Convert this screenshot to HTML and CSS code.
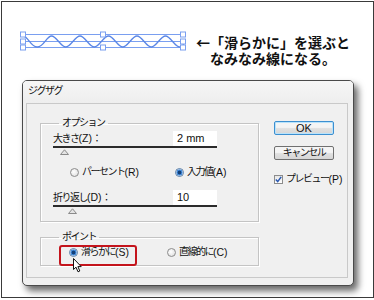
FILE: index.html
```html
<!DOCTYPE html>
<html lang="ja">
<head>
<meta charset="utf-8">
<title>ジグザグ</title>
<link rel="stylesheet" href="styles.css">
</head>
<body>
<div class="frame">
  <header class="note">
    <svg class="wave" width="166" height="20" viewBox="0 0 166 20">
      <g fill="none" stroke="#7a9ff0" stroke-width="1">
        <line x1="3" y1="3.5" x2="163" y2="3.5"/>
        <line x1="3" y1="10.5" x2="163" y2="10.5"/>
        <line x1="3" y1="16.5" x2="163" y2="16.5"/>
        <path d="M3 5 C 8 5, 10.5 16, 17.25 16 S 26.5 5, 31.5 5 S 40.75 16, 45.75 16 S 55 5, 60 5 S 69.25 16, 74.25 16 S 83.5 5, 88.5 5 S 97.75 16, 102.75 16 S 112 5, 117 5 S 126.25 16, 131.25 16 S 140.5 5, 145.5 5 S 154.75 16, 159.75 16 S 163 13, 163 12" stroke="#5a86e6" stroke-width="1.3"/>
      </g>
      <g fill="#fff" stroke="#7a9ff0" stroke-width="1">
        <rect x="0.5" y="1" width="5" height="5"/>
        <rect x="0.5" y="8" width="5" height="5"/>
        <rect x="0.5" y="14" width="5" height="5"/>
        <rect x="80.5" y="1" width="5" height="5"/>
        <rect x="80.5" y="14" width="5" height="5"/>
        <rect x="160.5" y="1" width="5" height="5"/>
        <rect x="160.5" y="8" width="5" height="5"/>
        <rect x="160.5" y="14" width="5" height="5"/>
      </g>
    </svg>
    <p class="caption"><span class="line">←「滑らかに」を選ぶと</span><span class="line">なみなみ線になる。</span></p>
  </header>

  <div class="dialog">
    <div class="titlebar">ジグザグ</div>
    <div class="panel">
      <div class="groups">
        <fieldset class="group options">
          <legend>オプション</legend>
          <div class="field">
            <span class="label">大きさ<span class="en">(Z)</span>：</span>
            <span class="input">2 mm</span>
          </div>
          <div class="slider">
            <svg class="thumb thumb-size" width="9" height="6" viewBox="0 0 9 6"><path d="M0.5 5.5 L4.5 0.8 L8.5 5.5 Z" fill="#e4e4e4" stroke="#8a8a8a" stroke-width="1"/></svg>
          </div>
          <div class="radios radios-options">
            <span class="choice"><span class="radio"></span>パーセント<span class="en">(R)</span></span>
            <span class="choice"><span class="radio on"></span>入力値<span class="en">(A)</span></span>
          </div>
          <div class="field field-second">
            <span class="label">折り返し<span class="en">(D)</span>：</span>
            <span class="input">10</span>
          </div>
          <div class="slider">
            <svg class="thumb thumb-ridges" width="9" height="6" viewBox="0 0 9 6"><path d="M0.5 5.5 L4.5 0.8 L8.5 5.5 Z" fill="#e4e4e4" stroke="#8a8a8a" stroke-width="1"/></svg>
          </div>
        </fieldset>

        <fieldset class="group points">
          <legend>ポイント</legend>
          <div class="radios radios-points">
            <span class="choice"><span class="radio on"></span>滑らかに<span class="en">(S)</span></span>
            <span class="choice"><span class="radio"></span>直線的に<span class="en">(C)</span></span>
          </div>
          <span class="callout"></span>
          <svg class="cursor" width="10" height="15" viewBox="0 0 10 15">
            <path d="M0.5 0.5 L0.5 11.5 L3 9.2 L5 13.8 L6.8 13 L4.9 8.6 L8.2 8.6 Z" fill="#fff" stroke="#111" stroke-width="1" stroke-linejoin="round"/>
          </svg>
        </fieldset>
      </div>

      <div class="buttons">
        <span class="btn btn-default">OK</span>
        <span class="btn">キャンセル</span>
        <span class="check"><span class="box">
          <svg width="7" height="7" viewBox="0 0 7 7"><path d="M0.8 3.6 L2.7 5.6 L6.2 0.9" fill="none" stroke="#2a58b0" stroke-width="1.5"/></svg>
        </span>プレビュー<span class="en">(P)</span></span>
      </div>
    </div>
  </div>
</div>
</body>
</html>
```

FILE: styles.css
```css
* { box-sizing: border-box; }

html, body {
  margin: 0;
  padding: 0;
  background: #fff;
}

.frame {
  margin: 1px 0 0 1px;
  width: 373px;
  height: 297px;
  border: 1px solid #3a3a3a;
  background: #fff;
}

.note {
  display: flex;
  align-items: flex-start;
  height: 78px;
}

.wave {
  display: block;
  margin: 29px 0 0 18px;
}

.caption {
  margin: 33px 0 0 9px;
  width: 156px;
  text-align: center;
  font: 700 14px/15px "Noto Sans CJK JP", sans-serif;
  color: #111;
  white-space: nowrap;
}

.caption .line {
  display: block;
  height: 15.5px;
}

.dialog {
  margin-left: 20px;
  width: 332px;
  height: 206px;
  border: 1px solid #4a4a4a;
  border-radius: 5px;
  background: #f0f0f0;
  box-shadow: 4px 5px 7px rgba(0, 0, 0, 0.6);
  font: 10px/12px "Liberation Sans", "Noto Sans CJK JP", sans-serif;
  color: #111;
  letter-spacing: -1.5px;
  white-space: nowrap;
}

.en { letter-spacing: 0; font-size: 10.5px; }

.titlebar {
  height: 22px;
  padding: 4px 0 0 5px;
  line-height: 12px;
  border-radius: 4px 4px 0 0;
  background: linear-gradient(#f6f6f6, #eeeeee);
}

.panel {
  display: flex;
  margin: 0 5px 0 3px;
  height: 175px;
  padding: 13px 0 0 13px;
  border: 1px solid #c9c9c9;
  background: #f0f0f0;
}

.groups {
  width: 219px;
  flex: none;
  display: flex;
  flex-direction: column;
}

.group {
  position: relative;
  margin: 0;
  min-width: 0;
  padding: 0 41px 0 12px;
  border: 1px solid #c4c4c4;
  box-shadow: inset 1px 1px 0 #fff, 1px 1px 0 #fff;
}

.group legend {
  margin-left: 6px;
  padding: 0 3px;
  line-height: 12px;
}

.options { padding-bottom: 8px; }

.field {
  display: flex;
  justify-content: space-between;
  align-items: center;
  height: 15px;
  margin-top: 2px;
}

.field-second { margin-top: 12px; }

.input {
  width: 44px;
  height: 15px;
  padding: 0 0 0 4px;
  background: #fff;
  line-height: 15px;
  letter-spacing: 0;
  font-size: 11px;
}

.slider {
  height: 8px;
  border-top: 2px solid #2b2b2b;
}

.thumb {
  display: block;
  margin-top: 1px;
}

.thumb-size { margin-left: 7px; }
.thumb-ridges { margin-left: 15px; }

.radios {
  display: flex;
  align-items: center;
  height: 12px;
}

.radios-options { margin-top: 12px; padding-left: 17px; }
.radios-options .choice:first-child { width: 105px; }

.points { padding-bottom: 7px; margin-top: 9px; }
.radios-points { margin-top: 3px; padding-left: 16px; }
.radios-points .choice:first-child { width: 98px; }

.choice {
  display: flex;
  align-items: center;
  flex: none;
}

.radio {
  flex: none;
  width: 9px;
  height: 9px;
  margin-right: 3px;
  border-radius: 50%;
  border: 1px solid #8c8c8c;
  background: radial-gradient(circle at 40% 40%, #ffffff, #d9d9d9);
}

.radio.on {
  border-color: #5a7fa8;
  background: radial-gradient(circle, #123f78 0 1.6px, #3f86d6 2.2px 2.8px, #e8f2fc 3.3px);
}

.callout {
  position: absolute;
  left: 18px;
  top: 2px;
  width: 78px;
  height: 21px;
  border: 2px solid #c4141c;
  border-radius: 3px;
}

.cursor {
  position: absolute;
  left: 32px;
  top: 15px;
}

.buttons {
  display: flex;
  flex-direction: column;
  margin: 4px 0 0 15px;
  width: 62px;
  flex: none;
}

.btn {
  display: block;
  width: 60px;
  height: 14px;
  border: 1px solid #707070;
  border-radius: 2px;
  background: linear-gradient(#f4f4f4 0 45%, #e0e0e0 55%, #d6d6d6);
  text-align: center;
  line-height: 12px;
}

.btn + .btn { margin-top: 11px; }

.btn-default {
  border-color: #3c8fd0;
  box-shadow: inset 0 0 0 1px #b9e3fb;
  letter-spacing: 0;
  font-size: 11px;
}

.check {
  display: flex;
  align-items: center;
  margin-top: 13px;
  height: 12px;
}

.box {
  flex: none;
  display: flex;
  align-items: center;
  justify-content: center;
  width: 9px;
  height: 9px;
  margin-right: 3px;
  border: 1px solid #8c8c8c;
  background: linear-gradient(#e6e6e6, #ffffff);
}

.box svg { display: block; }
```
